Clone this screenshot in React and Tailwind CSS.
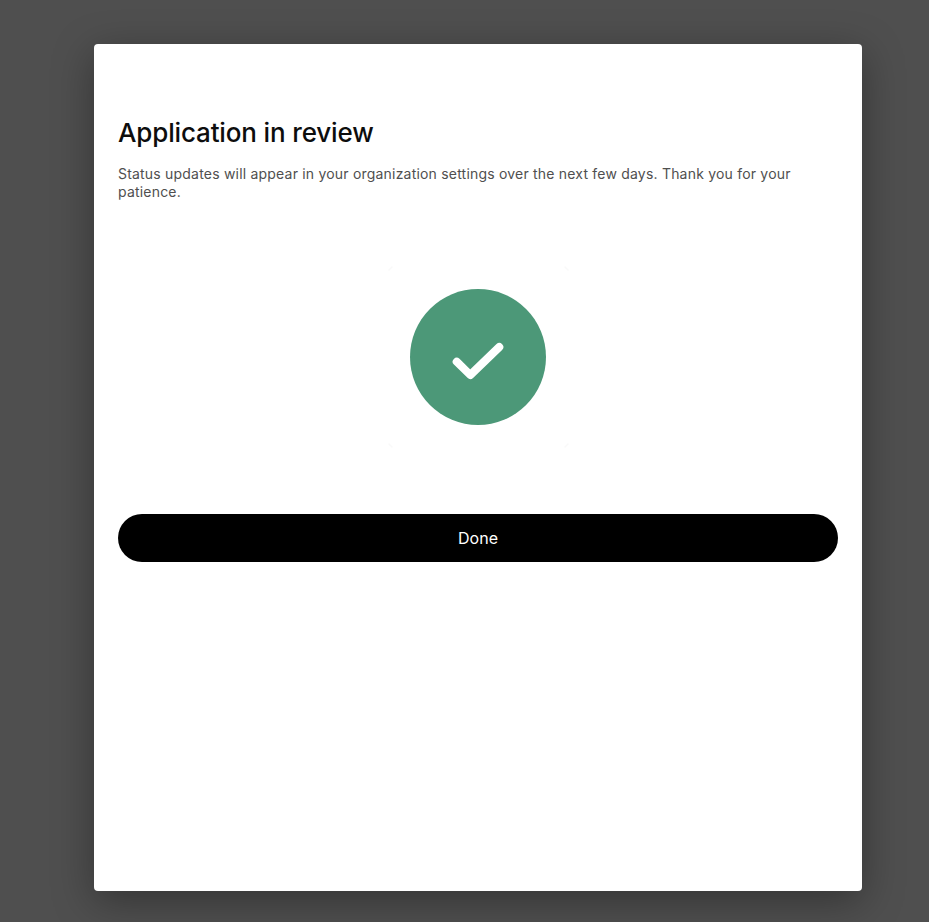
export default function App() {
  return (
    <div className="h-[922px] overflow-hidden bg-[#4f4f4f] pl-[94px] pt-[44px] font-['Inter',sans-serif]">
      <div className="flex h-[847px] w-[768px] flex-col rounded-[4px] bg-white px-6 pt-[71px] shadow-[0_10px_40px_rgba(0,0,0,0.35)]">
        <h1 className="text-[26px] leading-[36px] font-[450] tracking-[-0.15px] text-[#0d0d0d]">Application in review</h1>
        <p className="mt-[14px] text-[14px] leading-[18px] tracking-[0.2px] text-[#4f4f4f]">
          Status updates will appear in your organization settings over the next few days. Thank you for your patience.
        </p>
        <div className="mt-[88px] flex justify-center">
          <svg className="overflow-visible" width="136" height="136" viewBox="0 0 136 136" aria-hidden="true">
            <g fill="none" stroke="#f9f9f9" strokeWidth="1.5" strokeLinecap="round">
              <path d="M-21 -19 L-18 -22" />
              <path d="M155 -22 L158 -19" />
              <path d="M-21 155 L-18 158" />
              <path d="M155 158 L158 155" />
            </g>
            <circle cx="68" cy="68" r="68" fill="#4c9878" />
            <path d="M46.7 72.7 L60.3 86 L89.3 58" fill="none" stroke="#fff" strokeWidth="8" strokeLinecap="round" strokeLinejoin="round" />
          </svg>
        </div>
        <button className="mt-[89px] h-12 w-full rounded-full bg-black text-base font-normal text-white">Done</button>
      </div>
    </div>
  );
}
